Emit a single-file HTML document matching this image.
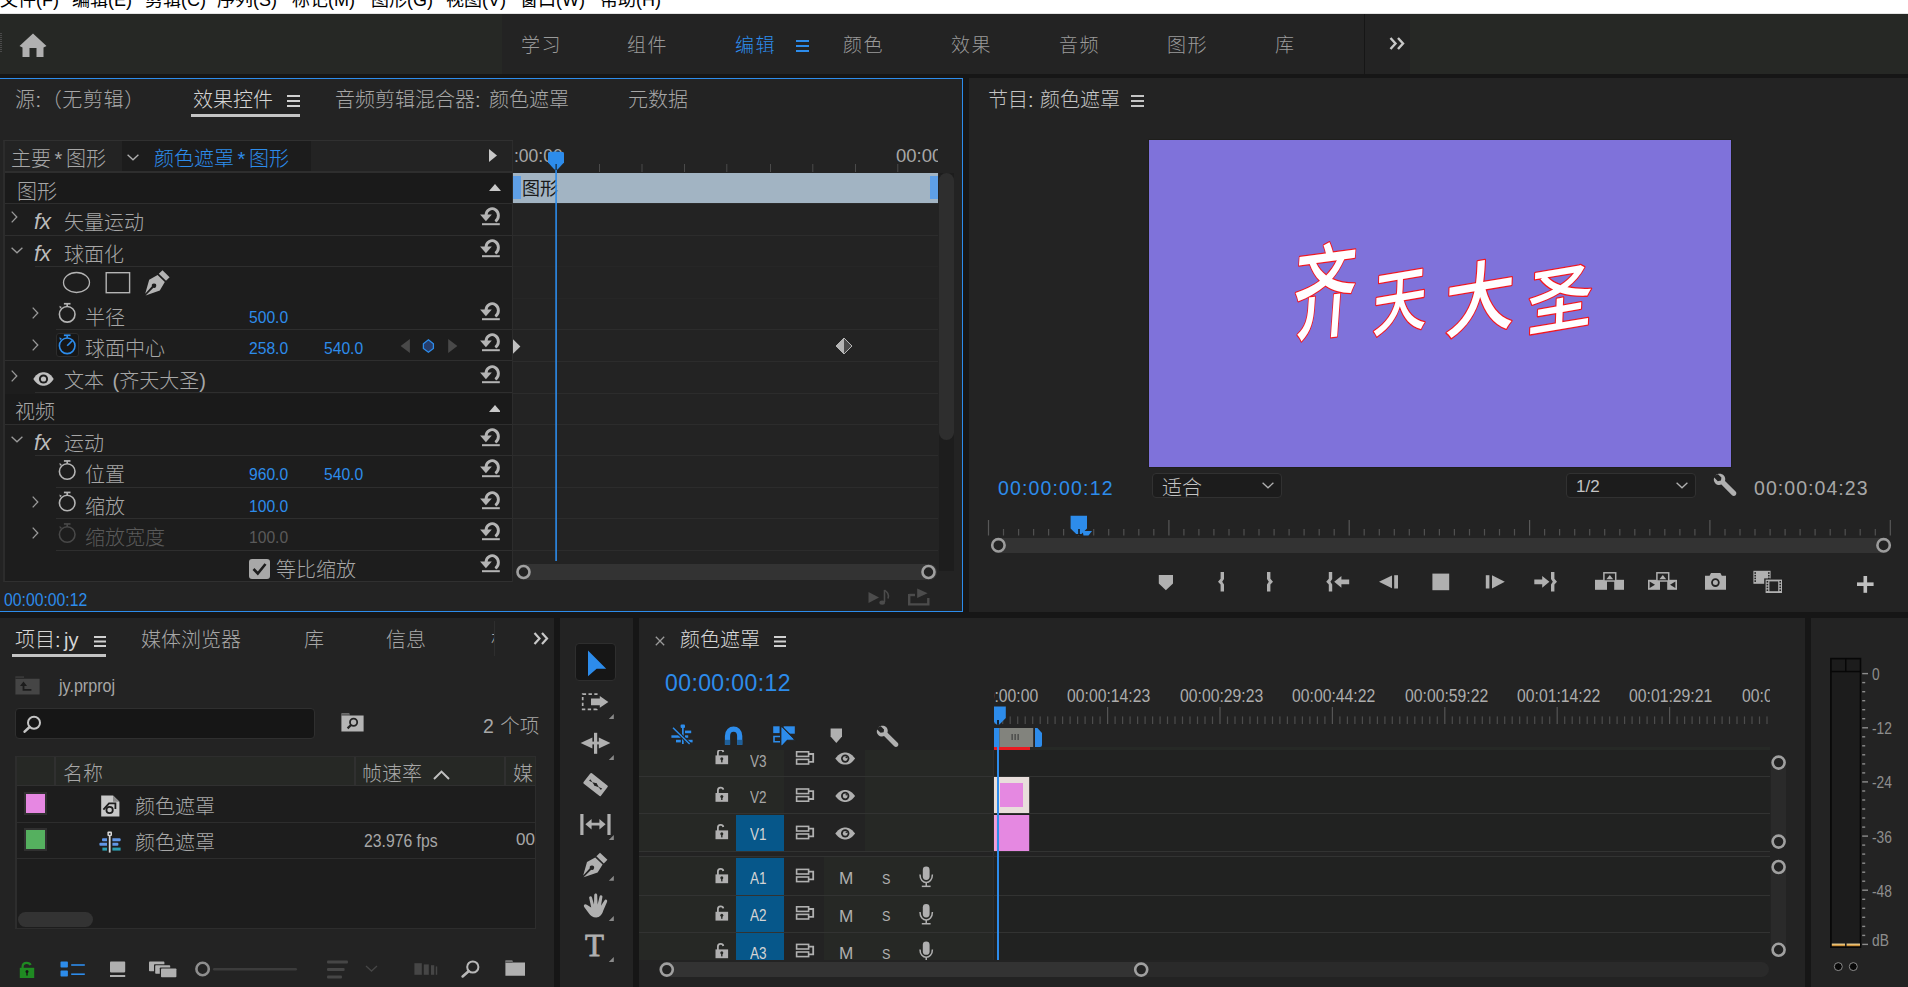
<!DOCTYPE html>
<html lang="zh-CN">
<head>
<meta charset="utf-8">
<title>Adobe Premiere Pro - jy.prproj</title>
<style>
*{box-sizing:border-box;margin:0;padding:0}
html,body{width:1908px;height:987px;overflow:hidden;background:#161616}
body{font-family:"Liberation Sans","Noto Sans CJK SC",sans-serif;font-weight:300;font-size:19px;color:#a7a7a7;position:relative;line-height:1}
.abs,#app *{position:absolute}
#app{position:absolute;left:0;top:0;width:1908px;height:987px;overflow:hidden}
.t{white-space:nowrap;line-height:24px;height:24px;letter-spacing:0;font-size:20px;padding-top:1px;word-spacing:-2px}
.blue{color:#2d8ceb !important}
.lt{color:#d6d6d6}
svg{overflow:visible}
/* menu */
#menubar{left:0;top:0;width:1908px;height:13px;background:#fff;overflow:hidden;border-bottom:0}
#menubar span{top:-12px;font-size:18px;color:#000;font-weight:400;white-space:nowrap;line-height:24px;letter-spacing:0}
/* header */
#header{left:0;top:14px;width:1908px;height:60px;background:#262825}
#wsbar{left:502px;top:0;width:908px;height:60px;background:#232323}
.ws{top:20px;font-size:19px;letter-spacing:1.5px;line-height:24px;color:#9a9a9a;white-space:nowrap}
.panel{background:#232323}
.n{font-size:17px;letter-spacing:0;font-weight:400;transform:scaleX(.92);transform-origin:0 50%}
.tc{font-size:17.5px;letter-spacing:0;font-weight:400;transform:scaleX(.9);transform-origin:0 50%}
.rl{font-size:17.5px;letter-spacing:0;font-weight:400;color:#a7a7a7}
.dim{color:#5a5a5a !important}

</style>
</head>
<body>
<div id="app">
<!-- MENUBAR -->
<div id="menubar">
<span style="left:0px">文件(F)</span><span style="left:72px">编辑(E)</span><span style="left:145px">剪辑(C)</span><span style="left:217px">序列(S)</span><span style="left:292px">标记(M)</span><span style="left:371px">图形(G)</span><span style="left:446px">视图(V)</span><span style="left:520px">窗口(W)</span><span style="left:600px">帮助(H)</span>
</div>
<div style="left:0;top:13px;width:1908px;height:1px;background:#e4e4e4"></div>
<!-- HEADER -->
<div id="header">
<div id="wsbar"></div>
<div style="left:0;top:19px;width:2px;height:20px;background:repeating-linear-gradient(#4a4a4a 0 1px,transparent 1px 2px)"></div>
<svg style="left:19px;top:19px" width="28" height="25" viewBox="0 0 28 25"><path d="M14 0.5 L27.5 13 L24.5 14.5 L24.5 24 L17.5 24 L17.5 15 L10.5 15 L10.5 24 L3.5 24 L3.5 14.5 L0.5 13 Z" fill="#b0b0b0"/></svg>
<span class="ws" style="left:521px">学习</span>
<span class="ws" style="left:627px">组件</span>
<span class="ws blue" style="left:735px">编辑</span>
<span class="ws" style="left:843px">颜色</span>
<span class="ws" style="left:951px">效果</span>
<span class="ws" style="left:1059px">音频</span>
<span class="ws" style="left:1167px">图形</span>
<span class="ws" style="left:1275px">库</span>
<div style="left:796px;top:26px;width:13px;height:2px;background:#2d8ceb;box-shadow:0 5px 0 #2d8ceb,0 10px 0 #2d8ceb"></div>
<div style="left:1364px;top:0;width:1px;height:60px;background:#161616"></div>
<svg style="left:1389px;top:23px" width="16" height="13" viewBox="0 0 16 13"><path d="M1.5 1 L6.5 6.5 L1.5 12 M9 1 L14 6.5 L9 12" fill="none" stroke="#c8c8c8" stroke-width="2.4"/></svg>
</div>
<!-- PANELS BG -->
<div id="ec" class="panel" style="left:0;top:78px;width:963px;height:534px;border:1px solid #2d8ceb;border-left:0"></div>
<div id="pm" class="panel" style="left:969px;top:78px;width:939px;height:534px"></div>
<div id="pj" class="panel" style="left:0;top:618px;width:554px;height:369px"></div>
<div id="tl" class="panel" style="left:560px;top:618px;width:73px;height:369px"></div>
<div id="tm" class="panel" style="left:639px;top:618px;width:1166px;height:369px"></div>
<div id="am" class="panel" style="left:1811px;top:618px;width:97px;height:369px"></div>
<!-- EFFECT CONTROLS -->
<span class="t " style="left:15px;top:87px;letter-spacing:.6px">源:（无剪辑）</span>
<span class="t lt" style="left:193px;top:87px;">效果控件</span>
<div style="left:287px;top:95px;width:13px;height:2px;background:#d0d0d0;box-shadow:0 5px 0 #d0d0d0,0 10px 0 #d0d0d0"></div>
<div style="left:191px;top:114px;width:109px;height:3px;background:#c4c4c4;"></div>
<span class="t " style="left:335px;top:87px;word-spacing:3px">音频剪辑混合器: 颜色遮罩</span>
<span class="t " style="left:628px;top:87px;">元数据</span>
<div style="left:3px;top:140px;width:510px;height:442px;background:#1d1d1d;border:1px solid #303030;border-left:2px solid #2c2c2c"></div>
<div style="left:5px;top:141px;width:507px;height:30px;background:#232323;"></div>
<div style="left:122px;top:141px;width:189px;height:30px;background:#1c1c1c;"></div>
<div style="left:5px;top:171px;width:507px;height:2px;background:#2e2e2e"></div>
<span class="t " style="left:11px;top:146px;">主要 * 图形</span>
<svg style="left:127px;top:154px" width="12" height="7" viewBox="0 0 12 7"><path d="M0.6 0.7 L6 5.8 L11.4 0.7" fill="none" stroke="#b0b0b0" stroke-width="1.3"/></svg>
<span class="t blue" style="left:154px;top:146px;">颜色遮罩 * 图形</span>
<svg style="left:489px;top:149px" width="8" height="13" viewBox="0 0 8 13"><path d="M0 0 L8 6.5 L0 13 Z" fill="#c8c8c8"/></svg>
<div style="left:5px;top:173px;width:507px;height:30px;background:#1a1a1a;"></div>
<div style="left:5px;top:203px;width:507px;height:1px;background:#2e2e2e"></div>
<span class="t " style="left:17px;top:179px;">图形</span>
<svg style="left:489px;top:184px" width="12" height="7" viewBox="0 0 12 7"><path d="M0 7 L6 0 L12 7 Z" fill="#c8c8c8"/></svg>
<svg style="left:11px;top:211px" width="7" height="12" viewBox="0 0 7 12"><path d="M0.7 0.6 L5.8 6 L0.7 11.4" fill="none" stroke="#9a9a9a" stroke-width="1.3"/></svg>
<span class="t" style="left:34px;top:209px;font-style:italic;font-weight:400;font-size:22px;letter-spacing:0;color:#bcbcbc">fx</span>
<span class="t " style="left:64px;top:210px;">矢量运动</span>
<svg style="left:478px;top:207px" width="24" height="20" viewBox="478 207 24 20"><path d="M495.3 221.4 A6.2 6.8 0 1 0 486 215.2" fill="none" stroke="#b4b4b4" stroke-width="2.9"/><path d="M480.1 214.6 L491.8 214.6 L485.9 221.2 Z" fill="#b4b4b4"/><rect x="482" y="223.2" width="17.8" height="2" fill="#b4b4b4"/></svg>
<div style="left:5px;top:235px;width:507px;height:1px;background:#2e2e2e"></div>
<svg style="left:11.4px;top:247px" width="12" height="7" viewBox="0 0 12 7"><path d="M0.6 0.7 L6 5.8 L11.4 0.7" fill="none" stroke="#9a9a9a" stroke-width="1.3"/></svg>
<span class="t" style="left:34px;top:241px;font-style:italic;font-weight:400;font-size:22px;letter-spacing:0;color:#bcbcbc">fx</span>
<span class="t " style="left:64px;top:242px;">球面化</span>
<svg style="left:478px;top:239px" width="24" height="20" viewBox="478 207 24 20"><path d="M495.3 221.4 A6.2 6.8 0 1 0 486 215.2" fill="none" stroke="#b4b4b4" stroke-width="2.9"/><path d="M480.1 214.6 L491.8 214.6 L485.9 221.2 Z" fill="#b4b4b4"/><rect x="482" y="223.2" width="17.8" height="2" fill="#b4b4b4"/></svg>
<div style="left:35px;top:266px;width:477px;height:1px;background:#2e2e2e"></div>
<svg style="left:0;top:0" width="1" height="1"><ellipse cx="76.5" cy="282.5" rx="13" ry="10" fill="none" stroke="#b4b4b4" stroke-width="1.3"/><rect x="106.2" y="272.7" width="23.4" height="20" fill="none" stroke="#b4b4b4" stroke-width="1.4"/></svg>
<svg style="left:145px;top:270px" width="25" height="26" viewBox="0 0 25 26"><path d="M17.5 0.3 L24.6 7.2 L21 10.8 L13.8 3.8 Z" fill="#b4b4b4"/><path d="M12.6 5 L19.8 12 L14.8 20.5 L0.6 25.4 L8.4 17.8 A2.2 2.2 0 1 0 6.9 16.2 L0.2 23.8 L4.2 9.8 Z" fill="#b4b4b4"/></svg>
<svg style="left:32px;top:307px" width="7" height="12" viewBox="0 0 7 12"><path d="M0.7 0.6 L5.8 6 L0.7 11.4" fill="none" stroke="#9a9a9a" stroke-width="1.3"/></svg>
<svg style="left:0;top:0" width="1" height="1"><circle cx="67.2" cy="314.3" r="7.8" fill="none" stroke="#b4b4b4" stroke-width="1.6"/><rect x="63.900000000000006" y="302.90000000000003" width="6.6" height="1.7" fill="#b4b4b4"/><rect x="66.4" y="303.8" width="1.6" height="2.6" fill="#b4b4b4"/><path d="M59.400000000000006 305.7 L61.800000000000004 307.1 L60.0 308.7 Z" fill="#b4b4b4"/></svg>
<span class="t " style="left:85px;top:305px;">半径</span>
<span class="t n blue" style="left:249px;top:305px;">500.0</span>
<svg style="left:478px;top:302px" width="24" height="20" viewBox="478 207 24 20"><path d="M495.3 221.4 A6.2 6.8 0 1 0 486 215.2" fill="none" stroke="#b4b4b4" stroke-width="2.9"/><path d="M480.1 214.6 L491.8 214.6 L485.9 221.2 Z" fill="#b4b4b4"/><rect x="482" y="223.2" width="17.8" height="2" fill="#b4b4b4"/></svg>
<div style="left:56px;top:329px;width:456px;height:1px;background:#2e2e2e"></div>
<svg style="left:32px;top:339px" width="7" height="12" viewBox="0 0 7 12"><path d="M0.7 0.6 L5.8 6 L0.7 11.4" fill="none" stroke="#9a9a9a" stroke-width="1.3"/></svg>
<div style="left:56px;top:333px;width:23px;height:24px;background:#161616;border:1px solid #2c2c2c;border-radius:3px"></div>
<svg style="left:0;top:0" width="1" height="1"><circle cx="67.2" cy="345.8" r="7.8" fill="none" stroke="#2d8ceb" stroke-width="1.6"/><rect x="63.900000000000006" y="334.40000000000003" width="6.6" height="1.7" fill="#2d8ceb"/><rect x="66.4" y="335.3" width="1.6" height="2.6" fill="#2d8ceb"/><path d="M59.400000000000006 337.2 L61.800000000000004 338.6 L60.0 340.2 Z" fill="#2d8ceb"/><path d="M67.2 345.8 L72.4 340.6" stroke="#2d8ceb" stroke-width="1.6"/></svg>
<span class="t " style="left:85px;top:336px;">球面中心</span>
<span class="t n blue" style="left:249px;top:336px;">258.0</span>
<span class="t n blue" style="left:324px;top:336px;">540.0</span>
<svg style="left:478px;top:333px" width="24" height="20" viewBox="478 207 24 20"><path d="M495.3 221.4 A6.2 6.8 0 1 0 486 215.2" fill="none" stroke="#b4b4b4" stroke-width="2.9"/><path d="M480.1 214.6 L491.8 214.6 L485.9 221.2 Z" fill="#b4b4b4"/><rect x="482" y="223.2" width="17.8" height="2" fill="#b4b4b4"/></svg>
<svg style="left:0;top:0" width="1" height="1"><path d="M400.6 346 L409.9 338.9 L409.9 353 Z" fill="#494949"/><path d="M457.4 346 L448.2 338.9 L448.2 353 Z" fill="#494949"/><path d="M428.4 339.8 L433.4 343.8 L433.4 348.4 L428.4 352.2 L423.4 348.4 L423.4 343.8 Z" fill="#263d6b" stroke="#2d8ceb" stroke-width="1.3"/></svg>
<div style="left:5px;top:360px;width:507px;height:1px;background:#2e2e2e"></div>
<svg style="left:11px;top:370px" width="7" height="12" viewBox="0 0 7 12"><path d="M0.7 0.6 L5.8 6 L0.7 11.4" fill="none" stroke="#9a9a9a" stroke-width="1.3"/></svg>
<svg style="left:33px;top:372px" width="21" height="14" viewBox="0 0 21 14"><path d="M0.3 7 C4 1 8 0.3 10.5 0.3 C13 0.3 17 1 20.7 7 C17 13 13 13.7 10.5 13.7 C8 13.7 4 13 0.3 7 Z" fill="#c0c0c0"/><circle cx="10.5" cy="7" r="4.6" fill="#1d1d1d"/><circle cx="10.5" cy="7" r="2.6" fill="#c0c0c0"/></svg>
<span class="t " style="left:64px;top:368px;word-spacing:3px">文本 (齐天大圣)</span>
<svg style="left:478px;top:365px" width="24" height="20" viewBox="478 207 24 20"><path d="M495.3 221.4 A6.2 6.8 0 1 0 486 215.2" fill="none" stroke="#b4b4b4" stroke-width="2.9"/><path d="M480.1 214.6 L491.8 214.6 L485.9 221.2 Z" fill="#b4b4b4"/><rect x="482" y="223.2" width="17.8" height="2" fill="#b4b4b4"/></svg>
<div style="left:35px;top:392px;width:477px;height:1px;background:#2e2e2e"></div>
<div style="left:5px;top:394px;width:507px;height:30px;background:#1a1a1a;"></div>
<div style="left:5px;top:424px;width:507px;height:1px;background:#2e2e2e"></div>
<span class="t " style="left:15px;top:399px;">视频</span>
<svg style="left:489px;top:405px" width="12" height="7" viewBox="0 0 12 7"><path d="M0 7 L6 0 L12 7 Z" fill="#c8c8c8"/></svg>
<svg style="left:11.4px;top:436px" width="12" height="7" viewBox="0 0 12 7"><path d="M0.6 0.7 L6 5.8 L11.4 0.7" fill="none" stroke="#9a9a9a" stroke-width="1.3"/></svg>
<span class="t" style="left:34px;top:430px;font-style:italic;font-weight:400;font-size:22px;letter-spacing:0;color:#bcbcbc">fx</span>
<span class="t " style="left:64px;top:431px;">运动</span>
<svg style="left:478px;top:428px" width="24" height="20" viewBox="478 207 24 20"><path d="M495.3 221.4 A6.2 6.8 0 1 0 486 215.2" fill="none" stroke="#b4b4b4" stroke-width="2.9"/><path d="M480.1 214.6 L491.8 214.6 L485.9 221.2 Z" fill="#b4b4b4"/><rect x="482" y="223.2" width="17.8" height="2" fill="#b4b4b4"/></svg>
<div style="left:35px;top:455px;width:477px;height:1px;background:#2e2e2e"></div>
<svg style="left:0;top:0" width="1" height="1"><circle cx="67.2" cy="471.5" r="7.8" fill="none" stroke="#b4b4b4" stroke-width="1.6"/><rect x="63.900000000000006" y="460.1" width="6.6" height="1.7" fill="#b4b4b4"/><rect x="66.4" y="461.0" width="1.6" height="2.6" fill="#b4b4b4"/><path d="M59.400000000000006 462.9 L61.800000000000004 464.3 L60.0 465.9 Z" fill="#b4b4b4"/></svg>
<span class="t " style="left:85px;top:462px;">位置</span>
<span class="t n blue" style="left:249px;top:462px;">960.0</span>
<span class="t n blue" style="left:324px;top:462px;">540.0</span>
<svg style="left:478px;top:459px" width="24" height="20" viewBox="478 207 24 20"><path d="M495.3 221.4 A6.2 6.8 0 1 0 486 215.2" fill="none" stroke="#b4b4b4" stroke-width="2.9"/><path d="M480.1 214.6 L491.8 214.6 L485.9 221.2 Z" fill="#b4b4b4"/><rect x="482" y="223.2" width="17.8" height="2" fill="#b4b4b4"/></svg>
<div style="left:56px;top:487px;width:456px;height:1px;background:#2e2e2e"></div>
<svg style="left:32px;top:496px" width="7" height="12" viewBox="0 0 7 12"><path d="M0.7 0.6 L5.8 6 L0.7 11.4" fill="none" stroke="#9a9a9a" stroke-width="1.3"/></svg>
<svg style="left:0;top:0" width="1" height="1"><circle cx="67.2" cy="503" r="7.8" fill="none" stroke="#b4b4b4" stroke-width="1.6"/><rect x="63.900000000000006" y="491.6" width="6.6" height="1.7" fill="#b4b4b4"/><rect x="66.4" y="492.5" width="1.6" height="2.6" fill="#b4b4b4"/><path d="M59.400000000000006 494.4 L61.800000000000004 495.8 L60.0 497.4 Z" fill="#b4b4b4"/></svg>
<span class="t " style="left:85px;top:494px;">缩放</span>
<span class="t n blue" style="left:249px;top:494px;">100.0</span>
<svg style="left:478px;top:491px" width="24" height="20" viewBox="478 207 24 20"><path d="M495.3 221.4 A6.2 6.8 0 1 0 486 215.2" fill="none" stroke="#b4b4b4" stroke-width="2.9"/><path d="M480.1 214.6 L491.8 214.6 L485.9 221.2 Z" fill="#b4b4b4"/><rect x="482" y="223.2" width="17.8" height="2" fill="#b4b4b4"/></svg>
<div style="left:56px;top:518px;width:456px;height:1px;background:#2e2e2e"></div>
<svg style="left:32px;top:527px" width="7" height="12" viewBox="0 0 7 12"><path d="M0.7 0.6 L5.8 6 L0.7 11.4" fill="none" stroke="#9a9a9a" stroke-width="1.3"/></svg>
<svg style="left:0;top:0" width="1" height="1"><circle cx="67.2" cy="534.5" r="7.8" fill="none" stroke="#484848" stroke-width="1.6"/><rect x="63.900000000000006" y="523.1" width="6.6" height="1.7" fill="#484848"/><rect x="66.4" y="524.0" width="1.6" height="2.6" fill="#484848"/><path d="M59.400000000000006 525.9 L61.800000000000004 527.3 L60.0 528.9 Z" fill="#484848"/></svg>
<span class="t dim" style="left:85px;top:525px;">缩放宽度</span>
<span class="t n dim" style="left:249px;top:525px;">100.0</span>
<svg style="left:478px;top:522px" width="24" height="20" viewBox="478 207 24 20"><path d="M495.3 221.4 A6.2 6.8 0 1 0 486 215.2" fill="none" stroke="#b4b4b4" stroke-width="2.9"/><path d="M480.1 214.6 L491.8 214.6 L485.9 221.2 Z" fill="#b4b4b4"/><rect x="482" y="223.2" width="17.8" height="2" fill="#b4b4b4"/></svg>
<div style="left:56px;top:550px;width:456px;height:1px;background:#2e2e2e"></div>
<div style="left:249px;top:559px;width:21px;height:20px;background:#a8a8a8;border-radius:3px"></div>
<svg style="left:249px;top:559px" width="21" height="20" viewBox="0 0 21 20"><path d="M4.5 10 L8.8 14.5 L16.5 5" fill="none" stroke="#1d1d1d" stroke-width="2.6"/></svg>
<span class="t " style="left:276px;top:557px;">等比缩放</span>
<svg style="left:478px;top:554px" width="24" height="20" viewBox="478 207 24 20"><path d="M495.3 221.4 A6.2 6.8 0 1 0 486 215.2" fill="none" stroke="#b4b4b4" stroke-width="2.9"/><path d="M480.1 214.6 L491.8 214.6 L485.9 221.2 Z" fill="#b4b4b4"/><rect x="482" y="223.2" width="17.8" height="2" fill="#b4b4b4"/></svg>
<span class="t tc blue" style="left:4px;top:587px;">00:00:00:12</span>
<div style="left:513px;top:141px;width:426px;height:441px;background:#232323;"></div>
<div style="left:512px;top:141px;width:1px;height:441px;background:#2c2c2c;"></div>
<div style="left:513px;top:235px;width:425px;height:1px;background:#2c2c2c"></div>
<div style="left:513px;top:329px;width:425px;height:1px;background:#2c2c2c"></div>
<div style="left:513px;top:361px;width:425px;height:1px;background:#2c2c2c"></div>
<div style="left:513px;top:393px;width:425px;height:1px;background:#2c2c2c"></div>
<div style="left:513px;top:424px;width:425px;height:1px;background:#2c2c2c"></div>
<div style="left:513px;top:455px;width:425px;height:1px;background:#2c2c2c"></div>
<div style="left:513px;top:487px;width:425px;height:1px;background:#2c2c2c"></div>
<div style="left:513px;top:518px;width:425px;height:1px;background:#2c2c2c"></div>
<div style="left:513px;top:550px;width:425px;height:1px;background:#2c2c2c"></div>
<div style="left:513px;top:203px;width:425px;height:1px;background:#2c2c2c"></div>
<div style="left:513px;top:266px;width:425px;height:1px;background:#262626"></div>
<div style="left:513px;top:298px;width:425px;height:1px;background:#262626"></div>
<div style="left:500px;top:394px;width:12px;height:30px;background:#1a1a1a;"></div>
<div style="left:513px;top:141px;width:425px;height:31px;overflow:hidden"><span class="t rl" style="left:1px;top:2px">:00:00</span><span class="t rl" style="left:383px;top:2px;font-size:18.5px">00:00</span></div>
<svg style="left:0;top:0" width="1" height="1"><rect x="599.0" y="164" width="1" height="8" fill="#4a4a4a"/><rect x="641.5" y="164" width="1" height="8" fill="#4a4a4a"/><rect x="684.0" y="164" width="1" height="8" fill="#4a4a4a"/><rect x="726.3" y="164" width="1" height="8" fill="#4a4a4a"/><rect x="770.0" y="164" width="1" height="8" fill="#4a4a4a"/><rect x="812.3" y="164" width="1" height="8" fill="#4a4a4a"/><rect x="855.0" y="164" width="1" height="8" fill="#4a4a4a"/><rect x="897.3" y="164" width="1" height="8" fill="#4a4a4a"/></svg>
<div style="left:513px;top:173px;width:425px;height:30px;background:#a2b4c3;"></div>
<div style="left:513px;top:176px;width:8px;height:23px;background:#5e9fe6;"></div>
<div style="left:930px;top:176px;width:8px;height:23px;background:#5e9fe6;"></div>
<span class="t " style="left:522px;top:176px;color:#1a1a1a;font-weight:400;letter-spacing:0;font-size:18px">图形</span>
<div style="left:939px;top:173px;width:15px;height:398px;background:#1d1d1d;"></div>
<div style="left:939px;top:173px;width:15px;height:267px;background:#2e2e2e;border-radius:8px"></div>
<svg style="left:0;top:0" width="1" height="1"><path d="M549 152 Q556 150.8 563 152 Q564 152.3 564 153.5 L564 162.5 L557.6 169.5 L554.4 169.5 L548 162.5 L548 153.5 Q548 152.3 549 152 Z" fill="#2d8ceb"/><rect x="555.3" y="164" width="1.6" height="397" fill="#2d8ceb"/><rect x="555.6" y="164" width="1" height="6" fill="#111"/></svg>
<svg style="left:0;top:0" width="1" height="1"><path d="M513 339.2 L520.4 346.5 L513 353.8 Z" fill="#c0c0c0"/><path d="M844 338 L852 346 L844 354 L836 346 Z" fill="#4a4a4a"/><path d="M844 338 L844 354 L836 346 Z" fill="#b4b4b4"/><path d="M844 338 L852 346 L844 354 L836 346 Z" fill="none" stroke="#b4b4b4" stroke-width="1"/></svg>
<div style="left:516px;top:564px;width:421px;height:16px;background:#333;border-radius:8px"></div>
<svg style="left:0;top:0" width="1" height="1"><circle cx="523.5" cy="572" r="6" fill="#232323" stroke="#a0a0a0" stroke-width="2.6"/><circle cx="928.5" cy="572" r="6" fill="#232323" stroke="#a0a0a0" stroke-width="2.6"/></svg>
<svg style="left:868px;top:589px" width="24" height="18" viewBox="0 0 24 18"><path d="M0.5 3 L11 8.5 L0.5 14 Z" fill="#4c4c4c"/><path d="M16.5 1 L16.5 13" stroke="#4c4c4c" stroke-width="1.6"/><ellipse cx="14.2" cy="13.6" rx="2.8" ry="2.2" fill="#4c4c4c"/><path d="M16.5 1 C19 3 21.5 5 20 9.5" fill="none" stroke="#4c4c4c" stroke-width="1.6"/></svg>
<svg style="left:908.4px;top:587.6px" width="22" height="18" viewBox="0 0 22 18"><path d="M1.2 6 L1.2 16.4 L20.3 16.4 L20.3 10" fill="none" stroke="#4c4c4c" stroke-width="2.4"/><path d="M9.2 0.5 L19.6 5.2 L9.2 10 Z" fill="#4c4c4c"/><path d="M1.2 7 L7 7" stroke="#4c4c4c" stroke-width="2.4"/></svg>
<!-- PROGRAM MONITOR -->
<span class="t " style="left:988px;top:87px;color:#c4c4c4;word-spacing:1px">节目: 颜色遮罩</span>
<div style="left:1131px;top:95px;width:13px;height:2px;background:#c4c4c4;box-shadow:0 5px 0 #c4c4c4,0 10px 0 #c4c4c4"></div>
<div style="left:1148px;top:139px;width:584px;height:329px;background:#1e1e1b;"></div>
<div style="left:1149px;top:140px;width:582px;height:327px;background:#7f72da;"></div>
<svg style="left:1149px;top:140px" width="582" height="327" viewBox="1149 140 582 327"><g font-family="'Noto Sans CJK SC',sans-serif" font-weight="500" fill="#fff" stroke="#f2171f" stroke-width="2.6" paint-order="stroke" stroke-linejoin="round" text-anchor="middle"><text transform="translate(1322 330) skewX(-12) rotate(-8) scale(0.6 1)" font-size="104">齐</text><text transform="translate(1399 327) skewX(-12) rotate(-10) scale(0.74 1)" font-size="72">天</text><text transform="translate(1479 327) skewX(-12) rotate(-10) scale(0.86 1)" font-size="80">大</text><text transform="translate(1559 326) skewX(-12) rotate(-10) scale(0.86 1)" font-size="74">圣</text></g></svg>
<span class="t blue" style="left:998px;top:475px;font-size:19.5px;font-weight:400;letter-spacing:1.15px">00:00:00:12</span>
<div style="left:1152px;top:473px;width:130px;height:25px;background:#1c1c1c;border:1px solid #313131;border-radius:4px"></div>
<span class="t " style="left:1162px;top:475px;color:#c4c4c4">适合</span>
<svg style="left:1262px;top:482px" width="12" height="7" viewBox="0 0 12 7"><path d="M0.6 0.7 L6 5.8 L11.4 0.7" fill="none" stroke="#b0b0b0" stroke-width="1.3"/></svg>
<div style="left:1566px;top:473px;width:130px;height:25px;background:#1c1c1c;border:1px solid #313131;border-radius:4px"></div>
<span class="t " style="left:1576px;top:474px;color:#c4c4c4;font-size:17px;font-weight:400">1/2</span>
<svg style="left:1676px;top:482px" width="12" height="7" viewBox="0 0 12 7"><path d="M0.6 0.7 L6 5.8 L11.4 0.7" fill="none" stroke="#b0b0b0" stroke-width="1.3"/></svg>
<svg style="left:1713px;top:473px" width="24" height="24" viewBox="0 0 24 24"><path d="M2.2 2.6 C4.6 0.2 8.4 0 10.6 2.2 C12.2 3.8 12.6 6 12 8 L22.6 18.6 C23.6 19.6 23.6 21.2 22.6 22.2 C21.6 23.2 20 23.2 19 22.2 L8.4 11.6 C6.4 12.4 4 12 2.4 10.4 C0.8 8.8 0.4 6.6 1.2 4.6 L4.8 8.2 L8 7.6 L8.4 4.6 L5 1.2 Z" fill="#b0b0b0"/></svg>
<span class="t " style="left:1754px;top:475px;font-size:19.5px;font-weight:400;letter-spacing:1.05px;color:#a7a7a7">00:00:04:23</span>
<svg style="left:0;top:0" width="1" height="1"><rect x="987.9" y="520" width="1.2" height="15.5" fill="#585858"/><rect x="1002.9" y="529" width="1.2" height="6.5" fill="#505050"/><rect x="1018.0" y="529" width="1.2" height="6.5" fill="#505050"/><rect x="1033.0" y="529" width="1.2" height="6.5" fill="#505050"/><rect x="1048.0" y="529" width="1.2" height="6.5" fill="#505050"/><rect x="1063.0" y="529" width="1.2" height="6.5" fill="#505050"/><rect x="1078.1" y="529" width="1.2" height="6.5" fill="#505050"/><rect x="1093.1" y="529" width="1.2" height="6.5" fill="#505050"/><rect x="1108.1" y="529" width="1.2" height="6.5" fill="#505050"/><rect x="1123.2" y="529" width="1.2" height="6.5" fill="#505050"/><rect x="1138.2" y="529" width="1.2" height="6.5" fill="#505050"/><rect x="1153.2" y="529" width="1.2" height="6.5" fill="#505050"/><rect x="1168.3" y="520" width="1.2" height="15.5" fill="#585858"/><rect x="1183.3" y="529" width="1.2" height="6.5" fill="#505050"/><rect x="1198.3" y="529" width="1.2" height="6.5" fill="#505050"/><rect x="1213.3" y="529" width="1.2" height="6.5" fill="#505050"/><rect x="1228.4" y="529" width="1.2" height="6.5" fill="#505050"/><rect x="1243.4" y="529" width="1.2" height="6.5" fill="#505050"/><rect x="1258.4" y="529" width="1.2" height="6.5" fill="#505050"/><rect x="1273.5" y="529" width="1.2" height="6.5" fill="#505050"/><rect x="1288.5" y="529" width="1.2" height="6.5" fill="#505050"/><rect x="1303.5" y="529" width="1.2" height="6.5" fill="#505050"/><rect x="1318.6" y="529" width="1.2" height="6.5" fill="#505050"/><rect x="1333.6" y="529" width="1.2" height="6.5" fill="#505050"/><rect x="1348.6" y="520" width="1.2" height="15.5" fill="#585858"/><rect x="1363.6" y="529" width="1.2" height="6.5" fill="#505050"/><rect x="1378.7" y="529" width="1.2" height="6.5" fill="#505050"/><rect x="1393.7" y="529" width="1.2" height="6.5" fill="#505050"/><rect x="1408.7" y="529" width="1.2" height="6.5" fill="#505050"/><rect x="1423.8" y="529" width="1.2" height="6.5" fill="#505050"/><rect x="1438.8" y="529" width="1.2" height="6.5" fill="#505050"/><rect x="1453.8" y="529" width="1.2" height="6.5" fill="#505050"/><rect x="1468.9" y="529" width="1.2" height="6.5" fill="#505050"/><rect x="1483.9" y="529" width="1.2" height="6.5" fill="#505050"/><rect x="1498.9" y="529" width="1.2" height="6.5" fill="#505050"/><rect x="1513.9" y="529" width="1.2" height="6.5" fill="#505050"/><rect x="1529.0" y="520" width="1.2" height="15.5" fill="#585858"/><rect x="1544.0" y="529" width="1.2" height="6.5" fill="#505050"/><rect x="1559.0" y="529" width="1.2" height="6.5" fill="#505050"/><rect x="1574.1" y="529" width="1.2" height="6.5" fill="#505050"/><rect x="1589.1" y="529" width="1.2" height="6.5" fill="#505050"/><rect x="1604.1" y="529" width="1.2" height="6.5" fill="#505050"/><rect x="1619.2" y="529" width="1.2" height="6.5" fill="#505050"/><rect x="1634.2" y="529" width="1.2" height="6.5" fill="#505050"/><rect x="1649.2" y="529" width="1.2" height="6.5" fill="#505050"/><rect x="1664.2" y="529" width="1.2" height="6.5" fill="#505050"/><rect x="1679.3" y="529" width="1.2" height="6.5" fill="#505050"/><rect x="1694.3" y="529" width="1.2" height="6.5" fill="#505050"/><rect x="1709.3" y="520" width="1.2" height="15.5" fill="#585858"/><rect x="1724.4" y="529" width="1.2" height="6.5" fill="#505050"/><rect x="1739.4" y="529" width="1.2" height="6.5" fill="#505050"/><rect x="1754.4" y="529" width="1.2" height="6.5" fill="#505050"/><rect x="1769.5" y="529" width="1.2" height="6.5" fill="#505050"/><rect x="1784.5" y="529" width="1.2" height="6.5" fill="#505050"/><rect x="1799.5" y="529" width="1.2" height="6.5" fill="#505050"/><rect x="1814.5" y="529" width="1.2" height="6.5" fill="#505050"/><rect x="1829.6" y="529" width="1.2" height="6.5" fill="#505050"/><rect x="1844.6" y="529" width="1.2" height="6.5" fill="#505050"/><rect x="1859.6" y="529" width="1.2" height="6.5" fill="#505050"/><rect x="1874.7" y="529" width="1.2" height="6.5" fill="#505050"/><rect x="1889.7" y="520" width="1.2" height="15.5" fill="#585858"/></svg>
<svg style="left:0;top:0" width="1" height="1"><path d="M1070.6 515.8 L1087 515.8 L1087 528.5 L1081.5 534 L1076.2 534 L1070.6 528.5 Z" fill="#2d8ceb"/><path d="M1082.5 531 L1092 531 L1088.5 535.4 L1083.5 535.4 Z" fill="#2d8ceb"/><rect x="1078.3" y="529" width="1.4" height="6" fill="#0c0c0c"/></svg>
<div style="left:991px;top:538px;width:900px;height:15px;background:#333;border-radius:8px"></div>
<svg style="left:0;top:0" width="1" height="1"><circle cx="998.4" cy="545.3" r="6.2" fill="#232323" stroke="#9c9c9c" stroke-width="2.6"/><circle cx="1883.6" cy="545.3" r="6.2" fill="#232323" stroke="#9c9c9c" stroke-width="2.6"/></svg>
<svg style="left:0;top:0" width="1" height="1"><path d="M1158.8 575 L1173 575 L1173 583.6 L1165.9 590.2 L1158.8 583.6 Z" fill="#b0b0b0"/><path d="M1220.6 572 L1224.0 572 L1224.0 579 L1222.1999999999998 581.7 L1224.0 584.4 L1224.0 591.5 L1220.6 591.5 L1220.6 584.6 L1218.0 581.7 L1220.6 578.8 Z" fill="#b0b0b0"/><path d="M1267 572 L1270.4 572 L1270.4 578.8 L1273 581.7 L1270.4 584.6 L1270.4 591.5 L1267 591.5 L1267 584.4 L1268.8 581.7 L1267 579 Z" fill="#b0b0b0"/><path d="M1328.8 572 L1332.2 572 L1332.2 579 L1330.3999999999999 581.7 L1332.2 584.4 L1332.2 591.5 L1328.8 591.5 L1328.8 584.6 L1326.2 581.7 L1328.8 578.8 Z" fill="#b0b0b0"/><path d="M1334.2 581.8 L1341.4 576 L1341.4 579.4 L1349.2 579.4 L1349.2 584.3 L1341.4 584.3 L1341.4 587.7 Z" fill="#b0b0b0"/><path d="M1379 581.8 L1392 575.4 L1392 588.3 Z" fill="#b0b0b0"/><rect x="1394.2" y="575.2" width="3.8" height="13.3" fill="#b0b0b0"/><rect x="1432.4" y="573.6" width="16.8" height="16.6" fill="#b0b0b0"/><rect x="1485.8" y="575.2" width="3.6" height="13.3" fill="#b0b0b0"/><path d="M1492 575.2 L1504.8 581.8 L1492 588.5 Z" fill="#b0b0b0"/><path d="M1549.4 581.8 L1542.2 576 L1542.2 579.4 L1534.3 579.4 L1534.3 584.3 L1542.2 584.3 L1542.2 587.7 Z" fill="#b0b0b0"/><path d="M1551 572 L1554.4 572 L1554.4 578.8 L1557 581.7 L1554.4 584.6 L1554.4 591.5 L1551 591.5 L1551 584.4 L1552.8 581.7 L1551 579 Z" fill="#b0b0b0"/><rect x="1595" y="579.8" width="12" height="10" fill="#b0b0b0"/><rect x="1614.2" y="579.8" width="9.8" height="10" fill="#b0b0b0"/><rect x="1603.9" y="572.8" width="11.8" height="8.2" fill="#232323" stroke="#b0b0b0" stroke-width="1.5"/><path d="M1606.4 579.2 L1609.8 575 L1613.2 579.2 Z" fill="#b0b0b0"/><rect x="1648" y="579.8" width="12" height="10" fill="#b0b0b0"/><rect x="1667.2" y="579.8" width="9.8" height="10" fill="#b0b0b0"/><rect x="1656.9" y="572.8" width="11.8" height="8.2" fill="#232323" stroke="#b0b0b0" stroke-width="1.5"/><path d="M1659.4 579.2 L1662.8 575 L1666.2 579.2 Z" fill="#b0b0b0"/><path d="M1649.6 581.6 L1655 584.8 L1649.6 588 Z" fill="#232323"/><path d="M1675.4 581.6 L1670 584.8 L1675.4 588 Z" fill="#232323"/><path d="M1705 575.8 L1709.6 575.8 L1711 573 L1720.4 573 L1721.8 575.8 L1726 575.8 L1726 589.8 L1705 589.8 Z" fill="#b0b0b0"/><circle cx="1715.4" cy="582.6" r="3.4" fill="none" stroke="#232323" stroke-width="1.8"/><rect x="1753.4" y="570.8" width="17.2" height="13" fill="#b0b0b0"/><rect x="1754.4" y="572.2" width="1.6" height="1.6" fill="#232323"/><rect x="1768.0000000000002" y="572.2" width="1.6" height="1.6" fill="#232323"/><rect x="1754.4" y="574.9" width="1.6" height="1.6" fill="#232323"/><rect x="1768.0000000000002" y="574.9" width="1.6" height="1.6" fill="#232323"/><rect x="1754.4" y="577.6" width="1.6" height="1.6" fill="#232323"/><rect x="1768.0000000000002" y="577.6" width="1.6" height="1.6" fill="#232323"/><rect x="1754.4" y="580.3" width="1.6" height="1.6" fill="#232323"/><rect x="1768.0000000000002" y="580.3" width="1.6" height="1.6" fill="#232323"/><rect x="1764.2" y="578.4" width="19" height="15.6" fill="#232323"/><rect x="1765.6" y="579.6" width="16.4" height="13.4" fill="#b0b0b0"/><rect x="1766.6" y="581.0" width="1.6" height="1.6" fill="#232323"/><rect x="1779.4" y="581.0" width="1.6" height="1.6" fill="#232323"/><rect x="1766.6" y="583.8" width="1.6" height="1.6" fill="#232323"/><rect x="1779.4" y="583.8" width="1.6" height="1.6" fill="#232323"/><rect x="1766.6" y="586.6" width="1.6" height="1.6" fill="#232323"/><rect x="1779.4" y="586.6" width="1.6" height="1.6" fill="#232323"/><rect x="1766.6" y="589.4" width="1.6" height="1.6" fill="#232323"/><rect x="1779.4" y="589.4" width="1.6" height="1.6" fill="#232323"/><rect x="1769.4" y="581.4" width="8.8" height="9.8" fill="#232323"/><rect x="1857" y="582.4" width="16.6" height="3.6" fill="#c0c0c0"/><rect x="1863.5" y="576" width="3.6" height="16.8" fill="#c0c0c0"/></svg>
<!-- PROJECT PANEL -->
<span class="t lt" style="left:15px;top:627px;">项目: jy</span>
<div style="left:94px;top:636px;width:12px;height:2px;background:#d0d0d0;box-shadow:0 4.5px 0 #d0d0d0,0 9px 0 #d0d0d0"></div>
<div style="left:12px;top:654px;width:94px;height:3px;background:#c4c4c4;"></div>
<span class="t " style="left:141px;top:627px;">媒体浏览器</span>
<span class="t " style="left:304px;top:627px;">库</span>
<span class="t " style="left:386px;top:627px;">信息</span>
<div style="left:484px;top:627px;width:10px;height:26px;overflow:hidden"><span class="t" style="left:7px;top:0">标</span></div>
<div style="left:494px;top:621px;width:1px;height:35px;background:#2e2e2e;"></div>
<svg style="left:533px;top:632px" width="16" height="13" viewBox="0 0 16 13"><path d="M1.5 1 L6.5 6.5 L1.5 12 M9 1 L14 6.5 L9 12" fill="none" stroke="#c8c8c8" stroke-width="2.2"/></svg>
<svg style="left:15px;top:676px" width="25" height="19" viewBox="0 0 25 19"><path d="M0.4 0.4 L9 0.4 L9 2.8 L24.6 2.8 L24.6 18.6 L0.4 18.6 Z" fill="#454545"/><rect x="0.4" y="1.6" width="8.6" height="1.2" fill="#232323"/><path d="M5 10 L8.5 5.5 L12 10 L9.4 10 L9.4 13 L16.4 13 L16.4 14.8 L7.6 14.8 L7.6 10 Z" fill="#1c1c1c"/></svg>
<span class="t " style="left:59px;top:673px;font-size:18.5px;font-weight:400;letter-spacing:0;transform:scaleX(.87);transform-origin:0 50%">jy.prproj</span>
<div style="left:15px;top:708px;width:300px;height:31px;background:#161616;border:1px solid #2f2f2f;border-radius:4px"></div>
<svg style="left:0;top:0" width="1" height="1"><circle cx="34" cy="722.8" r="6" fill="none" stroke="#c4c4c4" stroke-width="2"/><path d="M29.6 727 L24.6 731.6" stroke="#c4c4c4" stroke-width="2.6" stroke-linecap="round"/></svg>
<svg style="left:341px;top:713px" width="24" height="19" viewBox="0 0 24 19"><path d="M0.4 0.4 L8.4 0.4 L8.4 2.4 L22.6 2.4 L22.6 18.4 L0.4 18.4 Z" fill="#b4b4b4"/><rect x="0.4" y="1.4" width="8" height="1" fill="#232323"/><circle cx="12.6" cy="9.2" r="3.6" fill="none" stroke="#232323" stroke-width="1.8"/><path d="M10 12 L6.6 15.4" stroke="#232323" stroke-width="2.2"/></svg>
<span class="t " style="left:483px;top:713px;font-size:19.5px;word-spacing:1px">2 个项</span>
<div style="left:15px;top:756px;width:521px;height:173px;background:#1d1d1d;border:1px solid #2d2d2d;border-left:2px solid #2d2d2d"></div>
<div style="left:17px;top:757px;width:518px;height:28px;background:#262825;"></div>
<div style="left:17px;top:785px;width:518px;height:1px;background:#303030"></div>
<div style="left:54px;top:757px;width:2px;height:28px;background:#303030;"></div>
<div style="left:354px;top:757px;width:2px;height:28px;background:#303030;"></div>
<div style="left:504px;top:757px;width:2px;height:28px;background:#303030;"></div>
<span class="t " style="left:63px;top:761px;">名称</span>
<span class="t " style="left:362px;top:761px;">帧速率</span>
<svg style="left:433px;top:770px" width="17" height="10" viewBox="0 0 17 10"><path d="M1 9 L8.5 1.6 L16 9" fill="none" stroke="#c0c0c0" stroke-width="2"/></svg>
<div style="left:506px;top:757px;width:27px;height:28px;overflow:hidden"><span class="t" style="left:7px;top:4px">媒体</span></div>
<div style="left:17px;top:822px;width:518px;height:1px;background:#2d2d2d"></div>
<div style="left:17px;top:858px;width:518px;height:1px;background:#2d2d2d"></div>
<div style="left:24px;top:792px;width:23px;height:23px;background:#e687e2;border:2px solid #303030"></div>
<svg style="left:101px;top:795px" width="19" height="22" viewBox="0 0 19 22"><path d="M0.2 0.4 L12 0.4 L18.4 6.8 L18.4 21.6 L0.2 21.6 Z" fill="#c8c8c8"/><path d="M12 0.4 L12 6.8 L18.4 6.8 Z" fill="#8a8a8a"/><circle cx="8.6" cy="15" r="3.2" fill="#c8c8c8" stroke="#1d1d1d" stroke-width="1.8"/><path d="M2.4 14.6 L8 8.4 L14.4 8.4 L14.4 14" fill="none" stroke="#1d1d1d" stroke-width="1.8"/></svg>
<span class="t " style="left:135px;top:794px;">颜色遮罩</span>
<div style="left:24px;top:828px;width:23px;height:23px;background:#55b05f;border:2px solid #303030"></div>
<svg style="left:99px;top:831px" width="23" height="22" viewBox="0 0 23 22"><rect x="3" y="7.2" width="18.6" height="3" rx="1" fill="#6297e6"/><rect x="0.4" y="11.8" width="19" height="3" rx="1" fill="#6297e6"/><rect x="3.4" y="16.6" width="18.2" height="3" fill="#2c9db0"/><rect x="8" y="6" width="5.4" height="15" fill="#1d1d1d"/><rect x="9.8" y="2" width="1.8" height="19.6" fill="#d8d8d8"/><rect x="8.4" y="0.6" width="4.6" height="4.4" rx="1" fill="#d8d8d8"/><rect x="9.9" y="2" width="1.6" height="2" fill="#444"/></svg>
<span class="t " style="left:135px;top:830px;">颜色遮罩</span>
<span class="t " style="left:364px;top:828px;font-size:17.5px;font-weight:400;letter-spacing:0;word-spacing:0;transform:scaleX(.9);transform-origin:0 50%">23.976 fps</span>
<div style="left:506px;top:823px;width:29px;height:34px;overflow:hidden"><span class="t" style="left:10px;top:4px;font-size:17px;font-weight:400">00:00</span></div>
<div style="left:18px;top:912px;width:75px;height:15px;background:#333;border-radius:8px"></div>
<svg style="left:0;top:0" width="1" height="1"><path d="M22.6 968.4 L22.6 966.6 C22.6 964 24.6 962.8 26.8 962.8 C28.6 962.8 30 963.6 30.6 965" fill="none" stroke="#1f8a22" stroke-width="2.2"/><rect x="19.8" y="967.8" width="14.4" height="10.2" fill="#1f8a22"/><circle cx="27" cy="971.4" r="1.5" fill="#161616"/><rect x="26.3" y="971.4" width="1.4" height="4.2" fill="#161616"/><rect x="60.5" y="961.6" width="7.4" height="6" rx="0.8" fill="#2d8ceb"/><rect x="60.5" y="970.6" width="7.4" height="6" rx="0.8" fill="#2d8ceb"/><rect x="71.2" y="964.2" width="13.6" height="1.6" fill="#2d8ceb"/><rect x="71.2" y="973.4" width="13.6" height="1.6" fill="#2d8ceb"/><rect x="110" y="961.6" width="15.2" height="10.8" rx="0.8" fill="#b0b0b0"/><rect x="110" y="975" width="15.2" height="2" fill="#b0b0b0"/><rect x="149" y="961.6" width="15.4" height="9.6" rx="0.8" fill="#b0b0b0"/><rect x="154" y="964.2" width="17" height="10.4" rx="0.8" fill="#232323"/><rect x="155.2" y="965.2" width="15" height="8.6" rx="0.8" fill="#b0b0b0"/><rect x="159.8" y="967.4" width="17.6" height="10.8" rx="0.8" fill="#232323"/><rect x="161" y="968.4" width="15.4" height="8.8" rx="0.8" fill="#b0b0b0"/><rect x="213" y="968" width="84" height="2.4" rx="1.2" fill="#3c3c3c"/><circle cx="202.6" cy="969" r="6.2" fill="#232323" stroke="#8e8e8e" stroke-width="2.6"/><rect x="327" y="960.4" width="21" height="3" rx="1" fill="#464646"/><rect x="327" y="968" width="17.6" height="3" rx="1" fill="#464646"/><rect x="327" y="975.4" width="15" height="3" rx="1" fill="#464646"/><path d="M366 966 L371.5 971 L377 966" fill="none" stroke="#464646" stroke-width="1.3"/><rect x="414.4" y="963.2" width="7.4" height="11.6" fill="#464646"/><rect x="423.8" y="964.4" width="5" height="10.4" fill="#464646"/><rect x="431" y="965.2" width="3.2" height="9.6" fill="#464646"/><rect x="435.8" y="966.4" width="1.4" height="8.4" fill="#464646"/><circle cx="472.8" cy="967" r="5.6" fill="none" stroke="#b8b8b8" stroke-width="2"/><path d="M468.6 971.2 L462.6 976.4" stroke="#b8b8b8" stroke-width="2.6" stroke-linecap="round"/><path d="M505.4 960.4 L512.4 960.4 L513 962.6 L525 962.6 L525 975.8 L505.4 975.8 Z" fill="#b0b0b0"/><rect x="505.4" y="961.6" width="7.4" height="1" fill="#232323"/></svg>
<!-- TOOLS -->
<div style="left:575px;top:643px;width:41px;height:38px;background:#161616;border:1px solid #2e2e2e;border-radius:4px"></div>
<svg style="left:0;top:0" width="1" height="1"><path d="M588 650.6 L606.2 668.8 L596.6 668.8 L588 676.2 Z" fill="#2d8ceb"/><rect x="582.7" y="694.1" width="14" height="15.2" fill="none" stroke="#b0b0b0" stroke-width="1.7" stroke-dasharray="3.4 2.4"/><rect x="589" y="696.6" width="13" height="10.6" fill="#232323"/><path d="M591 698.6 L599.8 698.6 L599.8 696 L608.4 701.9 L599.8 707.8 L599.8 705.2 L591 705.2 Z" fill="#b0b0b0"/><path d="M608.8 719 L613.8 714 L613.8 719 Z" fill="#8a8a8a"/><rect x="594" y="732.8" width="3.2" height="21" fill="#b0b0b0"/><path d="M580.6 743 L592.4 737.4 L592.4 748.6 Z" fill="#b0b0b0"/><rect x="590" y="741.6" width="11" height="2.8" fill="#b0b0b0"/><path d="M610.4 743 L598.8 737.4 L598.8 748.6 Z" fill="#b0b0b0"/><path d="M608.8 760 L613.8 755 L613.8 760 Z" fill="#8a8a8a"/><g transform="translate(595.6 784.6) rotate(38)"><rect x="-11" y="-6.6" width="22" height="13.2" rx="1.2" fill="#b0b0b0"/><path d="M-7.5 -1 L-4 0 L0 -1.6 L4 0 L7.5 -1 L7.5 1 L4 0.2 L0 1.6 L-4 0.2 L-7.5 1 Z" fill="#232323"/><circle cx="0" cy="0" r="1.4" fill="#232323"/></g><rect x="580.3" y="814" width="3.2" height="21" fill="#b0b0b0"/><rect x="607.4" y="814" width="3.2" height="21" fill="#b0b0b0"/><path d="M585.4 824.2 L591.6 819 L591.6 822.8 L599.4 822.8 L599.4 819 L605.6 824.2 L599.4 829.4 L599.4 825.6 L591.6 825.6 L591.6 829.4 Z" fill="#b0b0b0"/><path d="M608.8 840 L613.8 835 L613.8 840 Z" fill="#8a8a8a"/><g transform="translate(583 852.4)"><path d="M17 0.3 L24.4 7.4 L20.8 11 L13.4 3.8 Z" fill="#b0b0b0"/><path d="M12.2 5 L19.6 12.2 L14.6 20 L0.6 24.8 L8.2 17.4 A2.2 2.2 0 1 0 6.8 15.8 L0.2 23.2 L4 9.6 Z" fill="#b0b0b0"/></g><path d="M608.8 880.8 L613.8 875.8 L613.8 880.8 Z" fill="#8a8a8a"/><g transform="translate(583.6 893.4)"><path d="M7.6 14 L5.6 4.6 C5.2 2.6 7.8 2 8.4 4 L10.4 11 L10.6 1.8 C10.6 -0.4 13.6 -0.4 13.6 1.8 L14 11 L16 3 C16.6 1 19.2 1.6 18.8 3.6 L17.4 12.4 L20.8 7 C22 5.2 24.4 6.6 23.4 8.6 L19.6 17.4 C18.4 21.4 16.2 24 12.6 24 C9 24 7 22.2 5.2 19.8 L0.6 13.6 C-0.6 11.6 1.4 10 3.2 11.4 Z" fill="#b0b0b0"/></g><path d="M608.8 921 L613.8 916 L613.8 921 Z" fill="#8a8a8a"/><path d="M608.8 962 L613.8 957 L613.8 962 Z" fill="#8a8a8a"/></svg>
<span style="left:585px;top:928px;font-family:'Liberation Serif',serif;font-weight:400;font-size:31px;line-height:36px;color:#b0b0b0;letter-spacing:0;-webkit-text-stroke:0.8px #b0b0b0">T</span>
<!-- TIMELINE -->
<svg style="left:655px;top:636px" width="10" height="10" viewBox="0 0 10 10"><path d="M0.8 0.8 L9.2 9.2 M9.2 0.8 L0.8 9.2" stroke="#9a9a9a" stroke-width="1.3"/></svg>
<span class="t lt" style="left:680px;top:627px;">颜色遮罩</span>
<div style="left:774px;top:636px;width:12px;height:2px;background:#d0d0d0;box-shadow:0 4.5px 0 #d0d0d0,0 9px 0 #d0d0d0"></div>
<span class="t blue" style="left:665px;top:668px;font-size:23px;font-weight:400;letter-spacing:.4px;line-height:28px;height:28px">00:00:00:12</span>
<div style="left:639px;top:750px;width:355px;height:210px;background:#262825;"></div>
<div style="left:784px;top:750px;width:81px;height:102px;background:#232323;"></div>
<div style="left:784px;top:857px;width:40px;height:103px;background:#232323;"></div>
<div style="left:994px;top:750px;width:776px;height:210px;background:#212221;"></div>
<div style="left:994px;top:747px;width:776px;height:3px;background:#262926;"></div>
<div style="left:639px;top:776px;width:1131px;height:1px;background:#323332"></div>
<div style="left:639px;top:813px;width:1131px;height:1px;background:#323332"></div>
<div style="left:639px;top:851px;width:1131px;height:1px;background:#323332"></div>
<div style="left:639px;top:856px;width:1131px;height:1px;background:#323332"></div>
<div style="left:639px;top:895px;width:1131px;height:1px;background:#323332"></div>
<div style="left:639px;top:932px;width:1131px;height:1px;background:#323332"></div>
<div style="left:639px;top:852px;width:1131px;height:4px;background:#232323;"></div>
<div style="left:993px;top:750px;width:1px;height:210px;background:#2e2e2e;"></div>
<div style="left:736px;top:815px;width:48px;height:36px;background:#06578a;"></div>
<div style="left:736px;top:858px;width:48px;height:37px;background:#06578a;"></div>
<div style="left:736px;top:896px;width:48px;height:36px;background:#06578a;"></div>
<div style="left:736px;top:933px;width:48px;height:27px;background:#06578a;"></div>
<span class="t" style="left:750px;top:748px;font-size:16.5px;font-weight:400;letter-spacing:0;transform:scaleX(.82);transform-origin:0 50%;color:#a7a7a7">V3</span>
<span class="t" style="left:750px;top:784px;font-size:16.5px;font-weight:400;letter-spacing:0;transform:scaleX(.82);transform-origin:0 50%;color:#a7a7a7">V2</span>
<span class="t" style="left:750px;top:821px;font-size:16.5px;font-weight:400;letter-spacing:0;transform:scaleX(.82);transform-origin:0 50%;color:#d4d4d4">V1</span>
<span class="t" style="left:750px;top:865px;font-size:16.5px;font-weight:400;letter-spacing:0;transform:scaleX(.82);transform-origin:0 50%;color:#d4d4d4">A1</span>
<span class="t" style="left:750px;top:902px;font-size:16.5px;font-weight:400;letter-spacing:0;transform:scaleX(.82);transform-origin:0 50%;color:#d4d4d4">A2</span>
<span class="t" style="left:750px;top:940px;font-size:16.5px;font-weight:400;letter-spacing:0;transform:scaleX(.82);transform-origin:0 50%;color:#d4d4d4">A3</span>
<svg style="left:0;top:0" width="1" height="1"><clipPath id="trk"><rect x="639" y="750" width="360" height="210"/></clipPath><g clip-path="url(#trk)"><path d="M717.9 756 L717.9 752.6 C717.9 749.2 722.9 749.2 723.3 752" fill="none" stroke="#b0b0b0" stroke-width="1.8"/><rect x="715.5" y="755.4" width="12.6" height="8.8" fill="#b0b0b0"/><circle cx="721.8" cy="758.8" r="1.5" fill="#262825"/><rect x="721.1" y="758.8" width="1.4" height="3.6" fill="#262825"/><path d="M717.9 793.6 L717.9 790.2 C717.9 786.8000000000001 722.9 786.8000000000001 723.3 789.6" fill="none" stroke="#b0b0b0" stroke-width="1.8"/><rect x="715.5" y="793.0" width="12.6" height="8.8" fill="#b0b0b0"/><circle cx="721.8" cy="796.4" r="1.5" fill="#262825"/><rect x="721.1" y="796.4" width="1.4" height="3.6" fill="#262825"/><path d="M717.9 831 L717.9 827.6 C717.9 824.2 722.9 824.2 723.3 827" fill="none" stroke="#b0b0b0" stroke-width="1.8"/><rect x="715.5" y="830.4" width="12.6" height="8.8" fill="#b0b0b0"/><circle cx="721.8" cy="833.8" r="1.5" fill="#262825"/><rect x="721.1" y="833.8" width="1.4" height="3.6" fill="#262825"/><path d="M717.9 875 L717.9 871.6 C717.9 868.2 722.9 868.2 723.3 871" fill="none" stroke="#b0b0b0" stroke-width="1.8"/><rect x="715.5" y="874.4" width="12.6" height="8.8" fill="#b0b0b0"/><circle cx="721.8" cy="877.8" r="1.5" fill="#262825"/><rect x="721.1" y="877.8" width="1.4" height="3.6" fill="#262825"/><path d="M717.9 912.4 L717.9 909.0 C717.9 905.6 722.9 905.6 723.3 908.4" fill="none" stroke="#b0b0b0" stroke-width="1.8"/><rect x="715.5" y="911.8" width="12.6" height="8.8" fill="#b0b0b0"/><circle cx="721.8" cy="915.1999999999999" r="1.5" fill="#262825"/><rect x="721.1" y="915.1999999999999" width="1.4" height="3.6" fill="#262825"/><path d="M717.9 950 L717.9 946.6 C717.9 943.2 722.9 943.2 723.3 946" fill="none" stroke="#b0b0b0" stroke-width="1.8"/><rect x="715.5" y="949.4" width="12.6" height="8.8" fill="#b0b0b0"/><circle cx="721.8" cy="952.8" r="1.5" fill="#262825"/><rect x="721.1" y="952.8" width="1.4" height="3.6" fill="#262825"/><rect x="796.5999999999999" y="751.8" width="12" height="4.6" fill="none" stroke="#b0b0b0" stroke-width="1.6"/><rect x="796.5999999999999" y="759.4" width="12" height="4.6" fill="none" stroke="#b0b0b0" stroke-width="1.6"/><path d="M808.8 754 L813.1999999999999 754 L813.1999999999999 761.8 L808.8 761.8" fill="none" stroke="#b0b0b0" stroke-width="1.8"/><rect x="796.5999999999999" y="789.0" width="12" height="4.6" fill="none" stroke="#b0b0b0" stroke-width="1.6"/><rect x="796.5999999999999" y="796.6" width="12" height="4.6" fill="none" stroke="#b0b0b0" stroke-width="1.6"/><path d="M808.8 791.2 L813.1999999999999 791.2 L813.1999999999999 799.0 L808.8 799.0" fill="none" stroke="#b0b0b0" stroke-width="1.8"/><rect x="796.5999999999999" y="826.4" width="12" height="4.6" fill="none" stroke="#b0b0b0" stroke-width="1.6"/><rect x="796.5999999999999" y="834.0" width="12" height="4.6" fill="none" stroke="#b0b0b0" stroke-width="1.6"/><path d="M808.8 828.6 L813.1999999999999 828.6 L813.1999999999999 836.4 L808.8 836.4" fill="none" stroke="#b0b0b0" stroke-width="1.8"/><rect x="796.5999999999999" y="869.4" width="12" height="4.6" fill="none" stroke="#b0b0b0" stroke-width="1.6"/><rect x="796.5999999999999" y="877.0" width="12" height="4.6" fill="none" stroke="#b0b0b0" stroke-width="1.6"/><path d="M808.8 871.6 L813.1999999999999 871.6 L813.1999999999999 879.4 L808.8 879.4" fill="none" stroke="#b0b0b0" stroke-width="1.8"/><rect x="796.5999999999999" y="906.8" width="12" height="4.6" fill="none" stroke="#b0b0b0" stroke-width="1.6"/><rect x="796.5999999999999" y="914.4" width="12" height="4.6" fill="none" stroke="#b0b0b0" stroke-width="1.6"/><path d="M808.8 909 L813.1999999999999 909 L813.1999999999999 916.8 L808.8 916.8" fill="none" stroke="#b0b0b0" stroke-width="1.8"/><rect x="796.5999999999999" y="944.4" width="12" height="4.6" fill="none" stroke="#b0b0b0" stroke-width="1.6"/><rect x="796.5999999999999" y="952.0" width="12" height="4.6" fill="none" stroke="#b0b0b0" stroke-width="1.6"/><path d="M808.8 946.6 L813.1999999999999 946.6 L813.1999999999999 954.4 L808.8 954.4" fill="none" stroke="#b0b0b0" stroke-width="1.8"/><path d="M835.3 758.6 C839.3 753.0 842.8 752.6 845.1999999999999 752.6 C847.5999999999999 752.6 851.0999999999999 753.0 855.0999999999999 758.6 C851.0999999999999 764.2 847.5999999999999 764.6 845.1999999999999 764.6 C842.8 764.6 839.3 764.2 835.3 758.6 Z" fill="#b0b0b0"/><circle cx="845.1999999999999" cy="758.6" r="4.2" fill="#232323"/><circle cx="845.1999999999999" cy="758.6" r="2.4" fill="#b0b0b0"/><circle cx="846.3" cy="757.4" r="0.8" fill="#232323"/><path d="M835.3 796 C839.3 790.4 842.8 790 845.1999999999999 790 C847.5999999999999 790 851.0999999999999 790.4 855.0999999999999 796 C851.0999999999999 801.6 847.5999999999999 802 845.1999999999999 802 C842.8 802 839.3 801.6 835.3 796 Z" fill="#b0b0b0"/><circle cx="845.1999999999999" cy="796" r="4.2" fill="#232323"/><circle cx="845.1999999999999" cy="796" r="2.4" fill="#b0b0b0"/><circle cx="846.3" cy="794.8" r="0.8" fill="#232323"/><path d="M835.3 833.4 C839.3 827.8 842.8 827.4 845.1999999999999 827.4 C847.5999999999999 827.4 851.0999999999999 827.8 855.0999999999999 833.4 C851.0999999999999 839.0 847.5999999999999 839.4 845.1999999999999 839.4 C842.8 839.4 839.3 839.0 835.3 833.4 Z" fill="#b0b0b0"/><circle cx="845.1999999999999" cy="833.4" r="4.2" fill="#232323"/><circle cx="845.1999999999999" cy="833.4" r="2.4" fill="#b0b0b0"/><circle cx="846.3" cy="832.1999999999999" r="0.8" fill="#232323"/><rect x="922.8000000000001" y="866.6" width="6.8" height="13.4" rx="3.4" fill="#b0b0b0"/><path d="M920.0 874.6 C920.0 885.2 932.4000000000001 885.2 932.4000000000001 874.6" fill="none" stroke="#b0b0b0" stroke-width="1.5"/><rect x="925.5" y="882.6" width="1.5" height="3.4" fill="#b0b0b0"/><rect x="921.8000000000001" y="885.6" width="8.8" height="1.5" fill="#b0b0b0"/><rect x="922.8000000000001" y="904" width="6.8" height="13.4" rx="3.4" fill="#b0b0b0"/><path d="M920.0 912 C920.0 922.6 932.4000000000001 922.6 932.4000000000001 912" fill="none" stroke="#b0b0b0" stroke-width="1.5"/><rect x="925.5" y="920" width="1.5" height="3.4" fill="#b0b0b0"/><rect x="921.8000000000001" y="923" width="8.8" height="1.5" fill="#b0b0b0"/><rect x="922.8000000000001" y="941.4" width="6.8" height="13.4" rx="3.4" fill="#b0b0b0"/><path d="M920.0 949.4 C920.0 960.0 932.4000000000001 960.0 932.4000000000001 949.4" fill="none" stroke="#b0b0b0" stroke-width="1.5"/><rect x="925.5" y="957.4" width="1.5" height="3.4" fill="#b0b0b0"/><rect x="921.8000000000001" y="960.4" width="8.8" height="1.5" fill="#b0b0b0"/></g></svg>
<span class="t" style="left:838.6px;top:865px;font-size:16.5px;font-weight:400;letter-spacing:0;color:#b0b0b0;transform:scaleX(1.04);transform-origin:0 50%">M</span>
<span class="t" style="left:882px;top:865.5px;font-size:14px;font-weight:400;letter-spacing:0;color:#b0b0b0;transform:scaleX(.9);transform-origin:0 50%">S</span>
<span class="t" style="left:838.6px;top:902.5px;font-size:16.5px;font-weight:400;letter-spacing:0;color:#b0b0b0;transform:scaleX(1.04);transform-origin:0 50%">M</span>
<span class="t" style="left:882px;top:903.0px;font-size:14px;font-weight:400;letter-spacing:0;color:#b0b0b0;transform:scaleX(.9);transform-origin:0 50%">S</span>
<span class="t" style="left:838.6px;top:940px;font-size:16.5px;font-weight:400;letter-spacing:0;color:#b0b0b0;transform:scaleX(1.04);transform-origin:0 50%">M</span>
<span class="t" style="left:882px;top:940.5px;font-size:14px;font-weight:400;letter-spacing:0;color:#b0b0b0;transform:scaleX(.9);transform-origin:0 50%">S</span>
<svg style="left:0;top:0" width="1" height="1"><rect x="680.6" y="724.6" width="4.4" height="3.4" rx="1" fill="#2d8ceb"/><rect x="682" y="727" width="1.7" height="17" fill="#2d8ceb"/><rect x="685" y="730.6" width="6.2" height="2.6" fill="#2d8ceb"/><rect x="671.4" y="735.3" width="9.4" height="2.5" fill="#2d8ceb"/><rect x="685" y="735.3" width="3.2" height="2.5" fill="#2d8ceb"/><rect x="676" y="739.8" width="4.8" height="2.6" fill="#2d8ceb"/><rect x="685" y="739.8" width="7.6" height="2.6" fill="#2d8ceb"/><path d="M673 727.8 L689.6 744" stroke="#232323" stroke-width="3.6"/><path d="M673 727.8 L689.6 744" stroke="#2d8ceb" stroke-width="1.5"/><path d="M727.5 744.8 L727.5 736 C727.5 726.8 739.7 726.8 739.7 736 L739.7 744.8" fill="none" stroke="#2d8ceb" stroke-width="5.2"/><rect x="724.9" y="739.8" width="5.2" height="5" fill="#1f5f99"/><rect x="737.1" y="739.8" width="5.2" height="5" fill="#1f5f99"/><rect x="773.2" y="726.3" width="6.4" height="6.8" fill="#2d8ceb"/><path d="M780 736.5 L774 736.5 L774 741.8 L780 741.8" fill="none" stroke="#2d8ceb" stroke-width="1.6"/><rect x="783.6" y="726.3" width="11.2" height="7.4" fill="#2d8ceb"/><path d="M781 725.6 L795.4 740.2 L787.4 740.2 L781 747 Z" fill="#2d8ceb" stroke="#232323" stroke-width="1.3"/><path d="M781.6 727.2 L793.8 739.6 L787.2 739.6 L781.6 745.4 Z" fill="#2d8ceb"/><path d="M830.6 728.6 L842 728.6 L842 736.6 L836.3 743 L830.6 736.6 Z" fill="#b0b0b0"/></svg>
<svg style="left:875.5px;top:724.5px" width="23" height="23" viewBox="0 0 24 24"><path d="M2.2 2.6 C4.6 0.2 8.4 0 10.6 2.2 C12.2 3.8 12.6 6 12 8 L22.6 18.6 C23.6 19.6 23.6 21.2 22.6 22.2 C21.6 23.2 20 23.2 19 22.2 L8.4 11.6 C6.4 12.4 4 12 2.4 10.4 C0.8 8.8 0.4 6.6 1.2 4.6 L4.8 8.2 L8 7.6 L8.4 4.6 L5 1.2 Z" fill="#b0b0b0"/></svg>
<div style="left:994px;top:683px;width:776px;height:26px;overflow:hidden"><span class="t tc" style="left:-39px;top:0;color:#acacac">00:00:00:00</span><span class="t tc" style="left:73.4px;top:0;color:#acacac">00:00:14:23</span><span class="t tc" style="left:185.8px;top:0;color:#acacac">00:00:29:23</span><span class="t tc" style="left:298.2px;top:0;color:#acacac">00:00:44:22</span><span class="t tc" style="left:410.6px;top:0;color:#acacac">00:00:59:22</span><span class="t tc" style="left:523.0px;top:0;color:#acacac">00:01:14:22</span><span class="t tc" style="left:635.4px;top:0;color:#acacac">00:01:29:21</span><span class="t tc" style="left:747.8px;top:0;color:#acacac">00:01:44:21</span></div>
<svg style="left:0;top:0" width="1" height="1"><rect x="994.6" y="707" width="1.2" height="17" fill="#555"/><rect x="1002.1" y="716.4" width="1.2" height="7.6" fill="#4c4c4c"/><rect x="1009.6" y="716.4" width="1.2" height="7.6" fill="#4c4c4c"/><rect x="1017.1" y="716.4" width="1.2" height="7.6" fill="#4c4c4c"/><rect x="1024.6" y="716.4" width="1.2" height="7.6" fill="#4c4c4c"/><rect x="1032.1" y="716.4" width="1.2" height="7.6" fill="#4c4c4c"/><rect x="1039.6" y="716.4" width="1.2" height="7.6" fill="#4c4c4c"/><rect x="1047.1" y="716.4" width="1.2" height="7.6" fill="#4c4c4c"/><rect x="1054.5" y="716.4" width="1.2" height="7.6" fill="#4c4c4c"/><rect x="1062.0" y="716.4" width="1.2" height="7.6" fill="#4c4c4c"/><rect x="1069.5" y="716.4" width="1.2" height="7.6" fill="#4c4c4c"/><rect x="1077.0" y="716.4" width="1.2" height="7.6" fill="#4c4c4c"/><rect x="1084.5" y="716.4" width="1.2" height="7.6" fill="#4c4c4c"/><rect x="1092.0" y="716.4" width="1.2" height="7.6" fill="#4c4c4c"/><rect x="1099.5" y="716.4" width="1.2" height="7.6" fill="#4c4c4c"/><rect x="1107.0" y="707" width="1.2" height="17" fill="#555"/><rect x="1114.5" y="716.4" width="1.2" height="7.6" fill="#4c4c4c"/><rect x="1122.0" y="716.4" width="1.2" height="7.6" fill="#4c4c4c"/><rect x="1129.5" y="716.4" width="1.2" height="7.6" fill="#4c4c4c"/><rect x="1137.0" y="716.4" width="1.2" height="7.6" fill="#4c4c4c"/><rect x="1144.5" y="716.4" width="1.2" height="7.6" fill="#4c4c4c"/><rect x="1152.0" y="716.4" width="1.2" height="7.6" fill="#4c4c4c"/><rect x="1159.5" y="716.4" width="1.2" height="7.6" fill="#4c4c4c"/><rect x="1166.9" y="716.4" width="1.2" height="7.6" fill="#4c4c4c"/><rect x="1174.4" y="716.4" width="1.2" height="7.6" fill="#4c4c4c"/><rect x="1181.9" y="716.4" width="1.2" height="7.6" fill="#4c4c4c"/><rect x="1189.4" y="716.4" width="1.2" height="7.6" fill="#4c4c4c"/><rect x="1196.9" y="716.4" width="1.2" height="7.6" fill="#4c4c4c"/><rect x="1204.4" y="716.4" width="1.2" height="7.6" fill="#4c4c4c"/><rect x="1211.9" y="716.4" width="1.2" height="7.6" fill="#4c4c4c"/><rect x="1219.4" y="707" width="1.2" height="17" fill="#555"/><rect x="1226.9" y="716.4" width="1.2" height="7.6" fill="#4c4c4c"/><rect x="1234.4" y="716.4" width="1.2" height="7.6" fill="#4c4c4c"/><rect x="1241.9" y="716.4" width="1.2" height="7.6" fill="#4c4c4c"/><rect x="1249.4" y="716.4" width="1.2" height="7.6" fill="#4c4c4c"/><rect x="1256.9" y="716.4" width="1.2" height="7.6" fill="#4c4c4c"/><rect x="1264.4" y="716.4" width="1.2" height="7.6" fill="#4c4c4c"/><rect x="1271.9" y="716.4" width="1.2" height="7.6" fill="#4c4c4c"/><rect x="1279.3" y="716.4" width="1.2" height="7.6" fill="#4c4c4c"/><rect x="1286.8" y="716.4" width="1.2" height="7.6" fill="#4c4c4c"/><rect x="1294.3" y="716.4" width="1.2" height="7.6" fill="#4c4c4c"/><rect x="1301.8" y="716.4" width="1.2" height="7.6" fill="#4c4c4c"/><rect x="1309.3" y="716.4" width="1.2" height="7.6" fill="#4c4c4c"/><rect x="1316.8" y="716.4" width="1.2" height="7.6" fill="#4c4c4c"/><rect x="1324.3" y="716.4" width="1.2" height="7.6" fill="#4c4c4c"/><rect x="1331.8" y="707" width="1.2" height="17" fill="#555"/><rect x="1339.3" y="716.4" width="1.2" height="7.6" fill="#4c4c4c"/><rect x="1346.8" y="716.4" width="1.2" height="7.6" fill="#4c4c4c"/><rect x="1354.3" y="716.4" width="1.2" height="7.6" fill="#4c4c4c"/><rect x="1361.8" y="716.4" width="1.2" height="7.6" fill="#4c4c4c"/><rect x="1369.3" y="716.4" width="1.2" height="7.6" fill="#4c4c4c"/><rect x="1376.8" y="716.4" width="1.2" height="7.6" fill="#4c4c4c"/><rect x="1384.3" y="716.4" width="1.2" height="7.6" fill="#4c4c4c"/><rect x="1391.7" y="716.4" width="1.2" height="7.6" fill="#4c4c4c"/><rect x="1399.2" y="716.4" width="1.2" height="7.6" fill="#4c4c4c"/><rect x="1406.7" y="716.4" width="1.2" height="7.6" fill="#4c4c4c"/><rect x="1414.2" y="716.4" width="1.2" height="7.6" fill="#4c4c4c"/><rect x="1421.7" y="716.4" width="1.2" height="7.6" fill="#4c4c4c"/><rect x="1429.2" y="716.4" width="1.2" height="7.6" fill="#4c4c4c"/><rect x="1436.7" y="716.4" width="1.2" height="7.6" fill="#4c4c4c"/><rect x="1444.2" y="707" width="1.2" height="17" fill="#555"/><rect x="1451.7" y="716.4" width="1.2" height="7.6" fill="#4c4c4c"/><rect x="1459.2" y="716.4" width="1.2" height="7.6" fill="#4c4c4c"/><rect x="1466.7" y="716.4" width="1.2" height="7.6" fill="#4c4c4c"/><rect x="1474.2" y="716.4" width="1.2" height="7.6" fill="#4c4c4c"/><rect x="1481.7" y="716.4" width="1.2" height="7.6" fill="#4c4c4c"/><rect x="1489.2" y="716.4" width="1.2" height="7.6" fill="#4c4c4c"/><rect x="1496.7" y="716.4" width="1.2" height="7.6" fill="#4c4c4c"/><rect x="1504.1" y="716.4" width="1.2" height="7.6" fill="#4c4c4c"/><rect x="1511.6" y="716.4" width="1.2" height="7.6" fill="#4c4c4c"/><rect x="1519.1" y="716.4" width="1.2" height="7.6" fill="#4c4c4c"/><rect x="1526.6" y="716.4" width="1.2" height="7.6" fill="#4c4c4c"/><rect x="1534.1" y="716.4" width="1.2" height="7.6" fill="#4c4c4c"/><rect x="1541.6" y="716.4" width="1.2" height="7.6" fill="#4c4c4c"/><rect x="1549.1" y="716.4" width="1.2" height="7.6" fill="#4c4c4c"/><rect x="1556.6" y="707" width="1.2" height="17" fill="#555"/><rect x="1564.1" y="716.4" width="1.2" height="7.6" fill="#4c4c4c"/><rect x="1571.6" y="716.4" width="1.2" height="7.6" fill="#4c4c4c"/><rect x="1579.1" y="716.4" width="1.2" height="7.6" fill="#4c4c4c"/><rect x="1586.6" y="716.4" width="1.2" height="7.6" fill="#4c4c4c"/><rect x="1594.1" y="716.4" width="1.2" height="7.6" fill="#4c4c4c"/><rect x="1601.6" y="716.4" width="1.2" height="7.6" fill="#4c4c4c"/><rect x="1609.1" y="716.4" width="1.2" height="7.6" fill="#4c4c4c"/><rect x="1616.5" y="716.4" width="1.2" height="7.6" fill="#4c4c4c"/><rect x="1624.0" y="716.4" width="1.2" height="7.6" fill="#4c4c4c"/><rect x="1631.5" y="716.4" width="1.2" height="7.6" fill="#4c4c4c"/><rect x="1639.0" y="716.4" width="1.2" height="7.6" fill="#4c4c4c"/><rect x="1646.5" y="716.4" width="1.2" height="7.6" fill="#4c4c4c"/><rect x="1654.0" y="716.4" width="1.2" height="7.6" fill="#4c4c4c"/><rect x="1661.5" y="716.4" width="1.2" height="7.6" fill="#4c4c4c"/><rect x="1669.0" y="707" width="1.2" height="17" fill="#555"/><rect x="1676.5" y="716.4" width="1.2" height="7.6" fill="#4c4c4c"/><rect x="1684.0" y="716.4" width="1.2" height="7.6" fill="#4c4c4c"/><rect x="1691.5" y="716.4" width="1.2" height="7.6" fill="#4c4c4c"/><rect x="1699.0" y="716.4" width="1.2" height="7.6" fill="#4c4c4c"/><rect x="1706.5" y="716.4" width="1.2" height="7.6" fill="#4c4c4c"/><rect x="1714.0" y="716.4" width="1.2" height="7.6" fill="#4c4c4c"/><rect x="1721.5" y="716.4" width="1.2" height="7.6" fill="#4c4c4c"/><rect x="1728.9" y="716.4" width="1.2" height="7.6" fill="#4c4c4c"/><rect x="1736.4" y="716.4" width="1.2" height="7.6" fill="#4c4c4c"/><rect x="1743.9" y="716.4" width="1.2" height="7.6" fill="#4c4c4c"/><rect x="1751.4" y="716.4" width="1.2" height="7.6" fill="#4c4c4c"/><rect x="1758.9" y="716.4" width="1.2" height="7.6" fill="#4c4c4c"/><rect x="1766.4" y="716.4" width="1.2" height="7.6" fill="#4c4c4c"/></svg>
<svg style="left:0;top:0" width="1" height="1"><rect x="994" y="728" width="5.5" height="19" fill="#2d8ceb"/><rect x="999.4" y="728" width="33.8" height="19" fill="#82837d"/><rect x="1011.6" y="734" width="1" height="6" fill="#333"/><rect x="1014.6" y="734" width="1" height="6" fill="#333"/><rect x="1017.6" y="734" width="1" height="6" fill="#333"/><path d="M1035 728 L1037.4 728 L1042 733 L1042 745 Q1042 747 1040 747 L1035 747 Z" fill="#2d8ceb"/><rect x="994" y="747" width="36" height="3" fill="#ea1a21"/><rect x="994" y="777" width="35.2" height="36" fill="#e8dedb"/><rect x="1000" y="783" width="23" height="24" fill="#e588e1"/><rect x="994" y="815" width="35.2" height="36" fill="#e588e1"/><rect x="994" y="815" width="2.6" height="36" fill="#f0a2da"/><path d="M994 706.6 L1005.8 706.6 L1005.8 718 L999.4 724.6 L996.4 724.6 L994 722 Z" fill="#2d8ceb"/><rect x="997.2" y="720" width="1.6" height="4.6" fill="#0a0a0a"/><rect x="997" y="747" width="2" height="213" fill="#2d8ceb"/></svg>
<div style="left:1771px;top:757px;width:15px;height:91px;background:#2a2a2a;border-radius:8px"></div>
<div style="left:1771px;top:861px;width:15px;height:95px;background:#2a2a2a;border-radius:8px"></div>
<svg style="left:0;top:0" width="1" height="1"><circle cx="1778.6" cy="762.6" r="6" fill="#232323" stroke="#a0a0a0" stroke-width="2.6"/><circle cx="1778.6" cy="841.6" r="6" fill="#232323" stroke="#a0a0a0" stroke-width="2.6"/><circle cx="1778.6" cy="867" r="6" fill="#232323" stroke="#a0a0a0" stroke-width="2.6"/><circle cx="1778.6" cy="949.8" r="6" fill="#232323" stroke="#a0a0a0" stroke-width="2.6"/></svg>
<div style="left:659px;top:962px;width:1110px;height:15px;background:#2a2a2a;border-radius:8px"></div>
<div style="left:659px;top:962px;width:490px;height:15px;background:#333;border-radius:8px"></div>
<svg style="left:0;top:0" width="1" height="1"><circle cx="666.8" cy="969.6" r="6" fill="#232323" stroke="#a0a0a0" stroke-width="2.6"/><circle cx="1141.2" cy="969.6" r="6" fill="#232323" stroke="#a0a0a0" stroke-width="2.6"/></svg>
<!-- AUDIO METERS -->
<svg style="left:0;top:0" width="1" height="1"><rect x="1830.9" y="658.6" width="29.6" height="288.6" fill="#1c1c1c" stroke="#070707" stroke-width="1.6"/><rect x="1830.9" y="670.8" width="29.6" height="1.5" fill="#070707"/><rect x="1845" y="658.6" width="1.5" height="13" fill="#070707"/><defs><linearGradient id="yl" x1="0" y1="0" x2="0" y2="1"><stop offset="0" stop-color="#ffe9ae"/><stop offset="1" stop-color="#b8700f"/></linearGradient></defs><rect x="1831.8" y="943.6" width="13.2" height="2.6" fill="url(#yl)"/><rect x="1846.6" y="943.6" width="13.4" height="2.6" fill="url(#yl)"/><rect x="1862.2" y="672.9" width="5.8" height="1.4" fill="#8c8c8c"/><rect x="1862.2" y="681.9" width="3" height="1.4" fill="#8c8c8c"/><rect x="1862.2" y="691.0" width="3" height="1.4" fill="#8c8c8c"/><rect x="1862.2" y="700.0" width="3" height="1.4" fill="#8c8c8c"/><rect x="1862.2" y="709.0" width="3" height="1.4" fill="#8c8c8c"/><rect x="1862.2" y="718.0" width="3" height="1.4" fill="#8c8c8c"/><rect x="1862.2" y="727.1" width="5.8" height="1.4" fill="#8c8c8c"/><rect x="1862.2" y="736.1" width="3" height="1.4" fill="#8c8c8c"/><rect x="1862.2" y="745.1" width="3" height="1.4" fill="#8c8c8c"/><rect x="1862.2" y="754.1" width="3" height="1.4" fill="#8c8c8c"/><rect x="1862.2" y="763.2" width="3" height="1.4" fill="#8c8c8c"/><rect x="1862.2" y="772.2" width="3" height="1.4" fill="#8c8c8c"/><rect x="1862.2" y="781.2" width="5.8" height="1.4" fill="#8c8c8c"/><rect x="1862.2" y="790.3" width="3" height="1.4" fill="#8c8c8c"/><rect x="1862.2" y="799.3" width="3" height="1.4" fill="#8c8c8c"/><rect x="1862.2" y="808.3" width="3" height="1.4" fill="#8c8c8c"/><rect x="1862.2" y="817.3" width="3" height="1.4" fill="#8c8c8c"/><rect x="1862.2" y="826.4" width="3" height="1.4" fill="#8c8c8c"/><rect x="1862.2" y="835.4" width="5.8" height="1.4" fill="#8c8c8c"/><rect x="1862.2" y="844.4" width="3" height="1.4" fill="#8c8c8c"/><rect x="1862.2" y="853.4" width="3" height="1.4" fill="#8c8c8c"/><rect x="1862.2" y="862.5" width="3" height="1.4" fill="#8c8c8c"/><rect x="1862.2" y="871.5" width="3" height="1.4" fill="#8c8c8c"/><rect x="1862.2" y="880.5" width="3" height="1.4" fill="#8c8c8c"/><rect x="1862.2" y="889.5" width="5.8" height="1.4" fill="#8c8c8c"/><rect x="1862.2" y="898.6" width="3" height="1.4" fill="#8c8c8c"/><rect x="1862.2" y="907.6" width="3" height="1.4" fill="#8c8c8c"/><rect x="1862.2" y="916.6" width="3" height="1.4" fill="#8c8c8c"/><rect x="1862.2" y="925.7" width="3" height="1.4" fill="#8c8c8c"/><rect x="1862.2" y="934.7" width="3" height="1.4" fill="#8c8c8c"/><rect x="1862.2" y="943.7" width="5.8" height="1.4" fill="#8c8c8c"/><circle cx="1838.3" cy="966.6" r="4" fill="#080808" stroke="#8a8a8a" stroke-width="1"/><circle cx="1853.3" cy="966.6" r="4" fill="#080808" stroke="#8a8a8a" stroke-width="1"/></svg>
<span class="t" style="left:1872px;top:662.1px;font-size:16px;font-weight:400;letter-spacing:0;color:#8e8e8e;transform:scaleX(.86);transform-origin:0 50%">0</span>
<span class="t" style="left:1872px;top:716.3px;font-size:16px;font-weight:400;letter-spacing:0;color:#8e8e8e;transform:scaleX(.86);transform-origin:0 50%">-12</span>
<span class="t" style="left:1872px;top:770.4px;font-size:16px;font-weight:400;letter-spacing:0;color:#8e8e8e;transform:scaleX(.86);transform-origin:0 50%">-24</span>
<span class="t" style="left:1872px;top:824.6px;font-size:16px;font-weight:400;letter-spacing:0;color:#8e8e8e;transform:scaleX(.86);transform-origin:0 50%">-36</span>
<span class="t" style="left:1872px;top:878.7px;font-size:16px;font-weight:400;letter-spacing:0;color:#8e8e8e;transform:scaleX(.86);transform-origin:0 50%">-48</span>
<span class="t" style="left:1872px;top:928.4px;font-size:16px;font-weight:400;letter-spacing:0;color:#8e8e8e;transform:scaleX(.86);transform-origin:0 50%">dB</span>
</div>
</body>
</html>
